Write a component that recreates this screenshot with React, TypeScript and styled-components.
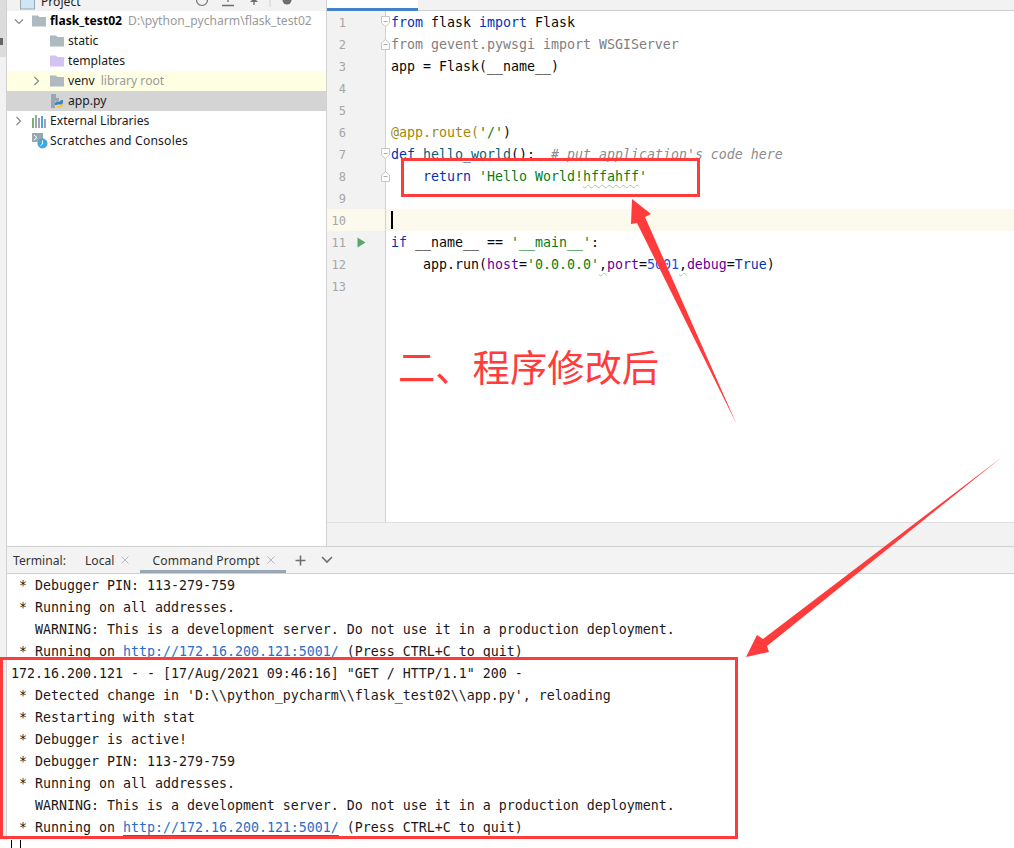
import React from 'react'
import styled, { createGlobalStyle } from 'styled-components'

const GlobalStyle = createGlobalStyle`
    html, body {
        margin: 0;
        padding: 0;
        background: #fff;
    }
    * {
        box-sizing: border-box;
    }
`

const uiFont = `"Noto Sans", "Open Sans", sans-serif`
const monoFont = `"DejaVu Sans Mono", "Liberation Mono", monospace`

const ChevronRight = () => (
    <svg width="9" height="10" viewBox="0 0 9 10" fill="none">
        <path d="M2.5 1 L6.5 5 L2.5 9" stroke="#7f8b91" strokeWidth="1.2" />
    </svg>
)

const ChevronDown = () => (
    <svg width="10" height="9" viewBox="0 0 10 9" fill="none">
        <path d="M1 2.5 L5 6.5 L9 2.5" stroke="#7f8b91" strokeWidth="1.2" />
    </svg>
)

const FolderIcon = ({ color }: { color: string }) => (
    <svg width="14" height="12" viewBox="0 0 14 12">
        <path d="M0 0.5 H6 L7.5 2 H14 V11.5 H0 Z" fill={color} />
    </svg>
)

const PythonFileIcon = () => (
    <svg width="14" height="16" viewBox="0 0 14 16">
        <path d="M1 1 H6 V5 H9 V8 H5 V15 H1 Z" fill="#9aa7b0" />
        <path d="M7 1 L9 4 H7 Z" fill="#c4ccd2" />
        <path d="M5 11 C5 8.5 7 8.5 8.5 8.5 C10 8.5 11 8 11 7 H13 V9.5 C13 11 11.5 11.5 10 11.5 H7 V12 H5 Z" fill="#3d85b8" />
        <path d="M13 11 C13 14 11 14.5 9.5 14.5 C8 14.5 6.5 15 6.5 13 H9 C11 13 12 12.5 12 11 Z" fill="#f4c430" />
    </svg>
)

const LibraryIcon = () => (
    <svg width="14" height="13" viewBox="0 0 14 13">
        <rect x="0" y="3" width="2" height="10" fill="#7fae6b" />
        <rect x="3" y="0" width="2" height="13" fill="#9aa7b0" />
        <rect x="6" y="3" width="2" height="10" fill="#9aa7b0" />
        <rect x="9" y="1" width="2" height="12" fill="#4fa3d8" />
        <rect x="12" y="4" width="2" height="9" fill="#9aa7b0" />
    </svg>
)

const ScratchIcon = () => (
    <svg width="16" height="16" viewBox="0 0 16 16">
        <rect x="0" y="0" width="11" height="9" fill="#9aa7b0" />
        <path d="M2 2 L5 4.5 L2 7" stroke="#fff" strokeWidth="1" fill="none" />
        <circle cx="10.5" cy="10.5" r="5" fill="#40a8de" />
        <path d="M10.5 7.5 V11 L8.5 12.5" stroke="#fff" strokeWidth="1" fill="none" />
    </svg>
)

const ProjectGlyph = () => (
    <svg width="15" height="10" viewBox="0 0 15 10">
        <rect x="0.5" y="-3" width="14" height="12" fill="#cfe6f5" stroke="#9aa7b0" />
    </svg>
)

const RunIcon = () => (
    <svg width="9" height="11" viewBox="0 0 9 11">
        <path d="M0.5 0.5 L8.5 5.5 L0.5 10.5 Z" fill="#59a869" />
    </svg>
)

const CloseGlyph = () => (
    <svg width="8" height="8" viewBox="0 0 8 8" fill="none">
        <path d="M0.5 0.5 L7.5 7.5 M7.5 0.5 L0.5 7.5" stroke="#b5b9bc" strokeWidth="1" />
    </svg>
)

const PlusGlyph = () => (
    <svg width="11" height="11" viewBox="0 0 11 11" fill="none">
        <path d="M5.5 0.5 V10.5 M0.5 5.5 H10.5" stroke="#6e6e6e" strokeWidth="1.6" />
    </svg>
)

const MoreGlyph = () => (
    <svg width="12" height="8" viewBox="0 0 12 8" fill="none">
        <path d="M1 1 L6 6 L11 1" stroke="#6e6e6e" strokeWidth="1.6" />
    </svg>
)

const ToolbarIcons = () => (
    <svg width="110" height="11" viewBox="0 0 110 11" fill="none">
        <circle cx="15" cy="0" r="5.5" stroke="#6e6e6e" strokeWidth="1.2" />
        <path d="M35 5.5 H47 M41 -3 V2" stroke="#6e6e6e" strokeWidth="1.3" />
        <path d="M63 2 L67 -2 L71 2 Z" fill="#6e6e6e" />
        <path d="M67 2 V5" stroke="#6e6e6e" strokeWidth="1.3" />
        <path d="M83 0 V7" stroke="#d1d1d1" />
        <circle cx="100" cy="0" r="4.5" fill="#6e6e6e" />
    </svg>
)

const FoldMark = ({ open }: { open?: boolean }) => (
    <FoldSvg width="9" height="11" viewBox="0 0 9 11" $open={open}>
        {open ? (
            <path d="M0.5 0.5 H8.5 V7 L4.5 10.5 L0.5 7 Z" fill="#fff" stroke="#c6c6c6" />
        ) : (
            <path d="M0.5 10.5 H8.5 V4 L4.5 0.5 L0.5 4 Z" fill="#fff" stroke="#c6c6c6" />
        )}
        <path d="M2.5 5.5 H6.5" stroke="#aaa" />
    </FoldSvg>
)

const Annotations = () => (
    <ArrowLayer width="1014" height="848" viewBox="0 0 1014 848">
        <polygon points="632,199 651,214 645,217 737,425 637,223 631,224" fill="#ff3b3b" />
        <polygon points="1002,457 767,646 769,652 746,657 757,635 763,639" fill="#ff3b3b" />
    </ArrowLayer>
)

const App = () => {
    return (
        <>
            <GlobalStyle />
            <Frame>
                <ToolStrip>
                    <ToolTab>
                        <ToolGlyph />
                    </ToolTab>
                </ToolStrip>
                <Main>
                    <Upper>
                        <ProjectPanel>
                            <PanelBar>
                                <ProjectGlyph />
                                <PanelTitle>Project</PanelTitle>
                                <ToolbarIcons />
                            </PanelBar>
                            <TreeRow $depth={0}>
                                <Twist><ChevronDown /></Twist>
                                <TreeIcon><FolderIcon color="#afb9c0" /></TreeIcon>
                                <RootName>flask_test02</RootName>
                                <Hint>D:\python_pycharm\flask_test02</Hint>
                            </TreeRow>
                            <TreeRow $depth={1}>
                                <Twist />
                                <TreeIcon><FolderIcon color="#afb9c0" /></TreeIcon>
                                <TreeLabel>static</TreeLabel>
                            </TreeRow>
                            <TreeRow $depth={1}>
                                <Twist />
                                <TreeIcon><FolderIcon color="#d3c2f2" /></TreeIcon>
                                <TreeLabel>templates</TreeLabel>
                            </TreeRow>
                            <TreeRow $depth={1} $bg="#ffffe4">
                                <Twist><ChevronRight /></Twist>
                                <TreeIcon><FolderIcon color="#afb9c0" /></TreeIcon>
                                <TreeLabel>venv</TreeLabel>
                                <Hint>library root</Hint>
                            </TreeRow>
                            <TreeRow $depth={1} $bg="#d4d4d4">
                                <Twist />
                                <TreeIcon><PythonFileIcon /></TreeIcon>
                                <TreeLabel>app.py</TreeLabel>
                            </TreeRow>
                            <TreeRow $depth={0}>
                                <Twist><ChevronRight /></Twist>
                                <TreeIcon><LibraryIcon /></TreeIcon>
                                <TreeLabel>External Libraries</TreeLabel>
                            </TreeRow>
                            <TreeRow $depth={0}>
                                <Twist />
                                <TreeIcon><ScratchIcon /></TreeIcon>
                                <WideLabel>Scratches and Consoles</WideLabel>
                            </TreeRow>
                        </ProjectPanel>
                        <EditorPane>
                            <TabBar>
                                <FileTab />
                            </TabBar>
                            <EditorBody>
                                <CodeRow>
                                    <LineNo>1</LineNo>
                                    <Gutter><FoldMark open /></Gutter>
                                    <Code><Kw>from</Kw> flask <Kw>import</Kw> Flask</Code>
                                </CodeRow>
                                <CodeRow>
                                    <LineNo>2</LineNo>
                                    <Gutter><FoldMark /></Gutter>
                                    <Code><Dim>from gevent.pywsgi import WSGIServer</Dim></Code>
                                </CodeRow>
                                <CodeRow>
                                    <LineNo>3</LineNo>
                                    <Gutter />
                                    <Code>app = Flask(__name__)</Code>
                                </CodeRow>
                                <CodeRow>
                                    <LineNo>4</LineNo>
                                    <Gutter />
                                    <Code />
                                </CodeRow>
                                <CodeRow>
                                    <LineNo>5</LineNo>
                                    <Gutter />
                                    <Code />
                                </CodeRow>
                                <CodeRow>
                                    <LineNo>6</LineNo>
                                    <Gutter />
                                    <Code><Deco>@app.route(</Deco><Str>'/'</Str>)</Code>
                                </CodeRow>
                                <CodeRow>
                                    <LineNo>7</LineNo>
                                    <Gutter><FoldMark open /></Gutter>
                                    <Code><Kw>def</Kw> <Fn>hello_world</Fn>():  <Comment># put application's code here</Comment></Code>
                                </CodeRow>
                                <CodeRow>
                                    <LineNo>8</LineNo>
                                    <Gutter><FoldMark /></Gutter>
                                    <Code>    <Kw>return</Kw> <Str>'Hello World!<Typo>hffahff</Typo>'</Str></Code>
                                </CodeRow>
                                <CodeRow>
                                    <LineNo>9</LineNo>
                                    <Gutter />
                                    <Code />
                                </CodeRow>
                                <CodeRow>
                                    <LineNo $active>10</LineNo>
                                    <Gutter $active />
                                    <Code $active><Caret /></Code>
                                </CodeRow>
                                <CodeRow>
                                    <LineNo>11</LineNo>
                                    <Gutter><RunSlot><RunIcon /></RunSlot></Gutter>
                                    <Code><Kw>if</Kw> __name__ == <Str>'__main__'</Str>:</Code>
                                </CodeRow>
                                <CodeRow>
                                    <LineNo>12</LineNo>
                                    <Gutter />
                                    <Code>    app.run(<Arg>host</Arg>=<Str>'0.0.0.0'</Str><Typo>,</Typo><Arg>port</Arg>=<Num>5001</Num><Typo>,</Typo><Arg>debug</Arg>=<Kw>True</Kw>)</Code>
                                </CodeRow>
                                <CodeRow>
                                    <LineNo>13</LineNo>
                                    <Gutter />
                                    <Code />
                                </CodeRow>
                                <GutterFill />
                            </EditorBody>
                            <BreadcrumbBar />
                        </EditorPane>
                    </Upper>
                    <TerminalBar>
                        <TerminalLabel>Terminal:</TerminalLabel>
                        <TerminalTab>Local<CloseGlyph /></TerminalTab>
                        <TerminalTab $selected>Command Prompt<CloseGlyph /></TerminalTab>
                        <BarAction><PlusGlyph /></BarAction>
                        <BarAction><MoreGlyph /></BarAction>
                    </TerminalBar>
                    <TerminalOutput>
                        <TermLine> * Debugger PIN: 113-279-759</TermLine>
                        <TermLine> * Running on all addresses.</TermLine>
                        <TermLine>   WARNING: This is a development server. Do not use it in a production deployment.</TermLine>
                        <TermLine> * Running on <TermLink>http://172.16.200.121:5001/</TermLink> (Press CTRL+C to quit)</TermLine>
                        <TermLine>172.16.200.121 - - [17/Aug/2021 09:46:16] "GET / HTTP/1.1" 200 -</TermLine>
                        <TermLine> * Detected change in 'D:\\python_pycharm\\flask_test02\\app.py', reloading</TermLine>
                        <TermLine> * Restarting with stat</TermLine>
                        <TermLine> * Debugger is active!</TermLine>
                        <TermLine> * Debugger PIN: 113-279-759</TermLine>
                        <TermLine> * Running on all addresses.</TermLine>
                        <TermLine>   WARNING: This is a development server. Do not use it in a production deployment.</TermLine>
                        <TermLine> * Running on <TermLink>http://172.16.200.121:5001/</TermLink> (Press CTRL+C to quit)</TermLine>
                        <BlockCursor />
                    </TerminalOutput>
                </Main>
                <CodeBox />
                <OutputBox />
                <Annotations />
                <Caption>二、程序修改后</Caption>
            </Frame>
        </>
    )
}

export default App

const Frame = styled.div`
    position: relative;
    display: flex;
    width: 1014px;
    height: 848px;
    overflow: hidden;
    background: #fff;
`

const ToolStrip = styled.div`
    flex: 0 0 7px;
    height: 840px;
    background: #f2f2f2;
    border-right: 1px solid #d1d1d1;
`

const ToolTab = styled.div`
    height: 57px;
    background: #dcdcdc;
    padding-top: 38px;
`

const ToolGlyph = styled.div`
    width: 3px;
    height: 7px;
    background: #666;
`

const Main = styled.div`
    flex: 1;
    display: flex;
    flex-direction: column;
    min-width: 0;
`

const Upper = styled.div`
    display: flex;
    height: 547px;
    border-bottom: 1px solid #d1d1d1;
`

const ProjectPanel = styled.div`
    flex: 0 0 320px;
    border-right: 1px solid #d1d1d1;
    font: 12.15px ${uiFont};
    color: #1a1a1a;
`

const PanelBar = styled.div`
    display: flex;
    align-items: flex-start;
    height: 11px;
    padding-left: 13px;
    overflow: hidden;
    background: #f2f2f2;
`

const PanelTitle = styled.span`
    flex: 0 0 146px;
    height: 11px;
    margin-left: 6px;
    line-height: 4px;
`

const TreeRow = styled.div<{ $depth: number; $bg?: string }>`
    display: flex;
    align-items: center;
    height: 20px;
    padding-left: ${props => 7 + props.$depth * 18}px;
    background: ${props => props.$bg || 'transparent'};
    white-space: nowrap;
`

const Twist = styled.span`
    display: flex;
    flex: 0 0 18px;
    align-items: center;
`

const TreeIcon = styled.span`
    display: flex;
    flex: 0 0 18px;
    align-items: center;
`

const TreeLabel = styled.span`
    line-height: 18px;
`

const WideLabel = styled(TreeLabel)`
    letter-spacing: 0.18px;
`

const RootName = styled(TreeLabel)`
    font-weight: 700;
    color: #000;
`

const Hint = styled(TreeLabel)`
    margin-left: 6px;
    color: #9a9a9a;
`

const EditorPane = styled.div`
    flex: 1;
    display: flex;
    flex-direction: column;
    min-width: 0;
`

const TabBar = styled.div`
    height: 11px;
    background: #f2f2f2;
    border-bottom: 1px solid #d1d1d1;
`

const FileTab = styled.div`
    width: 91px;
    height: 11px;
    background: #fff;
    border-bottom: 3px solid #4083c9;
`

const EditorBody = styled.div`
    flex: 1;
    display: flex;
    flex-direction: column;
`

const CodeRow = styled.div`
    display: flex;
    flex: 0 0 22px;
    min-height: 0;
    height: 22px;
    font: 13.29px/24px ${monoFont};
    color: #080808;
`

const LineNo = styled.div<{ $active?: boolean }>`
    flex: 0 0 19px;
    text-align: right;
    font-size: 12px;
    color: #a6a6a6;
    background: ${props => props.$active ? '#fcfaed' : '#f2f2f2'};
`

const Gutter = styled.div<{ $active?: boolean }>`
    position: relative;
    flex: 0 0 40px;
    background: ${props => props.$active ? '#fcfaed' : '#f2f2f2'};
    border-right: 1px solid #d1d1d1;
`

const GutterFill = styled.div`
    flex: 1;
    width: 59px;
    background: #f2f2f2;
    border-right: 1px solid #d1d1d1;
`

const FoldSvg = styled.svg<{ $open?: boolean }>`
    position: absolute;
    right: -5px;
    top: ${props => props.$open ? 5 : 6}px;
`

const RunSlot = styled.span`
    display: flex;
    height: 22px;
    padding-left: 11px;
    align-items: center;
`

const Code = styled.div<{ $active?: boolean }>`
    flex: 1;
    padding-left: 5px;
    white-space: pre;
    background: ${props => props.$active ? '#fcfaed' : 'transparent'};
`

const Kw = styled.span`
    color: #0033b3;
`

const Dim = styled.span`
    color: #808080;
`

const Str = styled.span`
    color: #067d17;
`

const Deco = styled.span`
    color: #9e880d;
`

const Fn = styled.span`
    color: #00627a;
`

const Comment = styled.span`
    color: #8c8c8c;
    font-style: italic;
`

const Arg = styled.span`
    color: #660099;
`

const Num = styled.span`
    color: #1750eb;
`

const Typo = styled.span`
    text-decoration: underline wavy #9fd0a3 1px;
    text-underline-offset: 3px;
`

const Caret = styled.span`
    display: block;
    width: 2px;
    height: 18px;
    margin-top: 2px;
    background: #000;
`

const BreadcrumbBar = styled.div`
    flex: 0 0 24px;
    background: #f2f2f2;
    border-top: 1px solid #e0e0e0;
`

const TerminalBar = styled.div`
    display: flex;
    align-items: stretch;
    height: 27px;
    padding-left: 6px;
    background: #f3f3f3;
    border-bottom: 1px solid #d1d1d1;
    font: 12.15px ${uiFont};
    color: #333;
`

const TerminalLabel = styled.span`
    display: flex;
    align-items: center;
    flex: 0 0 66px;
    padding-left: 0;
`

const TerminalTab = styled.span<{ $selected?: boolean }>`
    display: flex;
    align-items: center;
    gap: 7px;
    margin-right: ${props => props.$selected ? 2 : 0}px;
    padding: 3px 11px 0 ${props => props.$selected ? 12 : 6}px;
    letter-spacing: ${props => props.$selected ? 0.15 : 0}px;
    border-bottom: 3px solid ${props => props.$selected ? '#9aa7b7' : 'transparent'};
`

const BarAction = styled.span`
    display: flex;
    align-items: center;
    justify-content: center;
    flex: 0 0 26px;
`

const TerminalOutput = styled.div`
    flex: 1;
    padding-left: 4px;
`

const TermLine = styled.div`
    height: 22px;
    font: 13.29px/24px ${monoFont};
    color: #1a1a1a;
    white-space: pre;
`

const TermLink = styled.span`
    color: #2a6fc4;
    text-decoration: underline;
    text-decoration-color: #1f6fb5;
    text-underline-offset: 3px;
`

const BlockCursor = styled.div`
    width: 10px;
    height: 8px;
    margin-top: 2px;
    border-left: 1px solid #000;
    border-right: 1px solid #000;
`

const CodeBox = styled.div`
    position: absolute;
    left: 401px;
    top: 158px;
    width: 299px;
    height: 39px;
    border: 3px solid #ff3b3b;
`

const OutputBox = styled.div`
    position: absolute;
    left: 0;
    top: 657px;
    width: 738px;
    height: 182px;
    border: 3px solid #ff3b3b;
`

const ArrowLayer = styled.svg`
    position: absolute;
    left: 0;
    top: 0;
`

const Caption = styled.div`
    position: absolute;
    left: 398px;
    top: 340px;
    font: 37.3px/52px "Noto Sans CJK SC", sans-serif;
    color: #ff3b3b;
    white-space: nowrap;
`
